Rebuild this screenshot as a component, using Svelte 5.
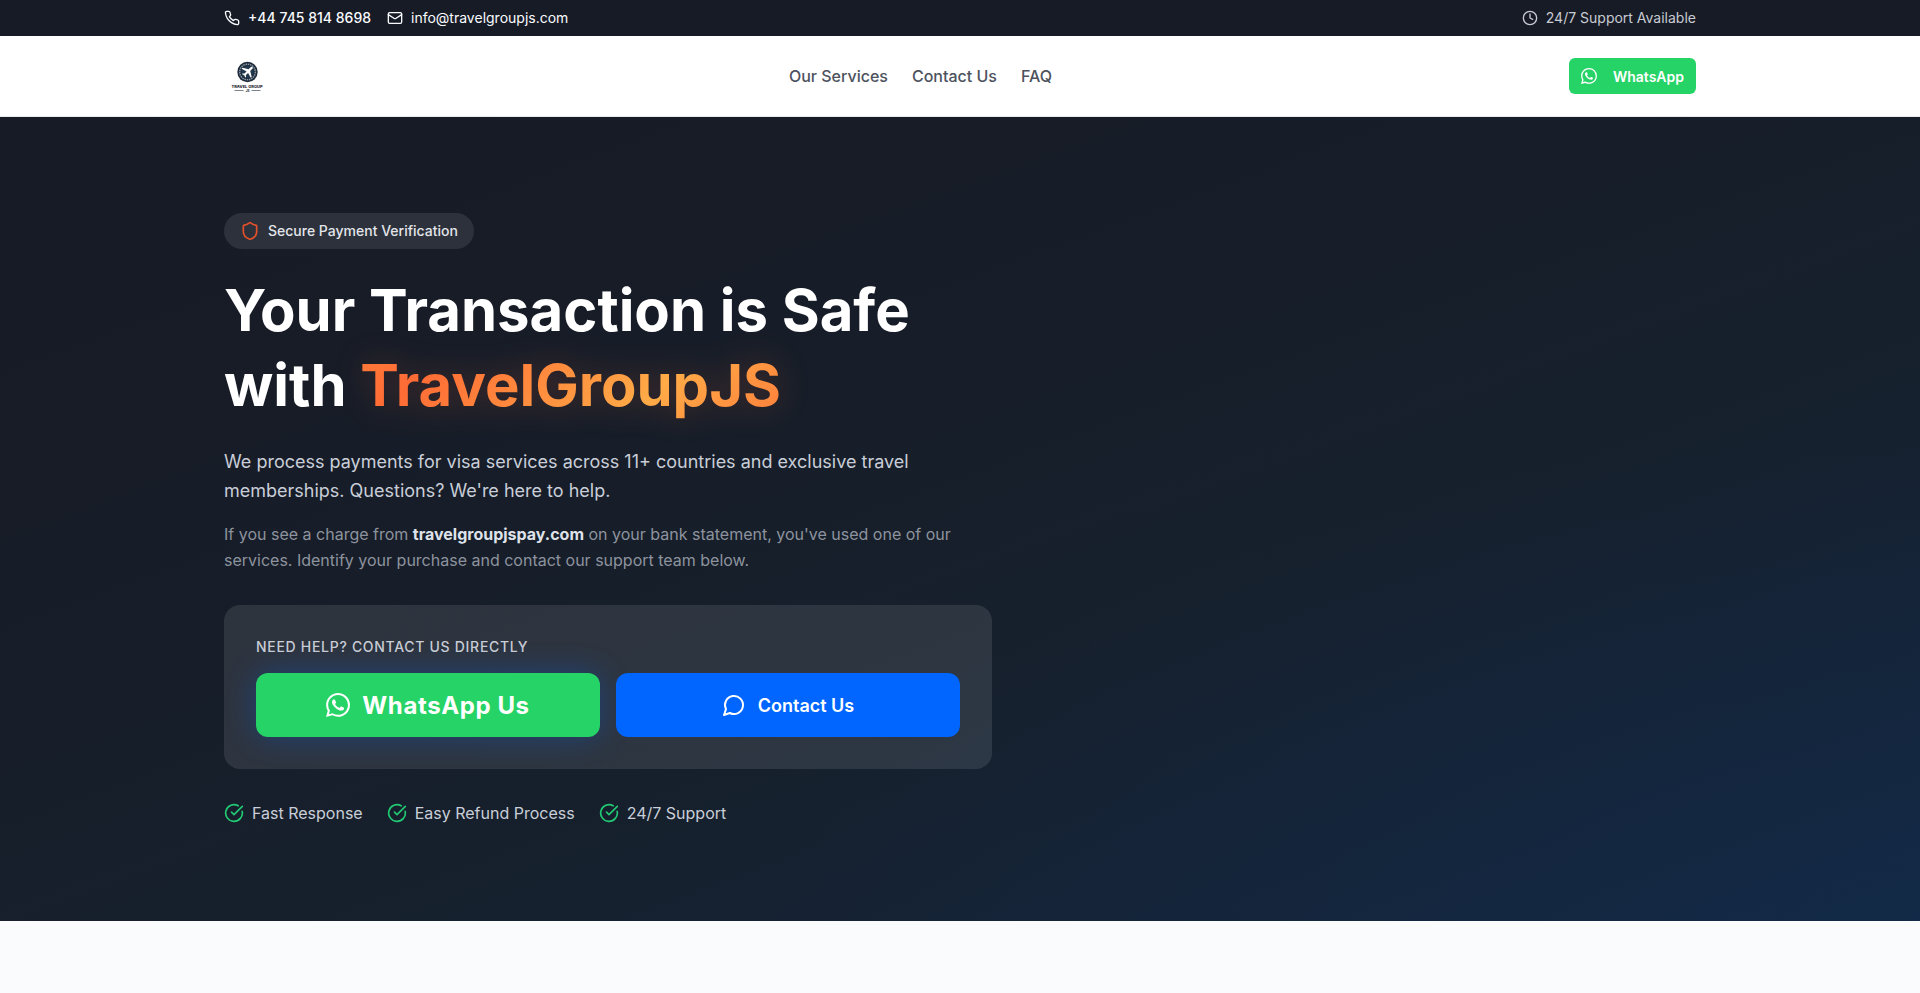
<script>
  const phone = '+44 745 814 8698';
  const email = 'info@travelgroupjs.com';
  const links = ['Our Services', 'Contact Us', 'FAQ'];
  const perks = ['Fast Response', 'Easy Refund Process', '24/7 Support'];
</script>

{#snippet whatsapp()}
  <svg class="icon" viewBox="0 0 24 24" fill="currentColor" aria-hidden="true">
    <path d="M17.472 14.382c-.297-.149-1.758-.867-2.03-.967-.273-.099-.471-.148-.67.15-.197.297-.767.966-.94 1.164-.173.199-.347.223-.644.075-.297-.15-1.255-.463-2.39-1.475-.883-.788-1.48-1.761-1.653-2.059-.173-.297-.018-.458.13-.606.134-.133.298-.347.446-.52.149-.174.198-.298.298-.497.099-.198.05-.371-.025-.52-.075-.149-.669-1.612-.916-2.207-.242-.579-.487-.5-.669-.51-.173-.008-.371-.01-.57-.01-.198 0-.52.074-.792.372-.272.297-1.04 1.016-1.04 2.479 0 1.462 1.065 2.875 1.213 3.074.149.198 2.096 3.2 5.077 4.487.709.306 1.262.489 1.694.625.712.227 1.36.195 1.871.118.571-.085 1.758-.719 2.006-1.413.248-.694.248-1.289.173-1.413-.074-.124-.272-.198-.57-.347m-5.421 7.403h-.004a9.87 9.87 0 01-5.031-1.378l-.361-.214-3.741.982.998-3.648-.235-.374a9.86 9.86 0 01-1.51-5.26c.001-5.45 4.436-9.884 9.888-9.884 2.64 0 5.122 1.03 6.988 2.898a9.825 9.825 0 012.893 6.994c-.003 5.45-4.437 9.884-9.885 9.884m8.413-18.297A11.815 11.815 0 0012.05 0C5.495 0 .16 5.335.157 11.892c0 2.096.547 4.142 1.588 5.945L.057 24l6.305-1.654a11.882 11.882 0 005.683 1.448h.005c6.554 0 11.89-5.335 11.893-11.893a11.821 11.821 0 00-3.48-8.413z" />
  </svg>
{/snippet}

<div class="topbar">
  <div class="container topbar-row">
    <div class="contacts">
      <a class="contact strong" href="tel:+447458148698">
        <svg class="icon line" viewBox="0 0 24 24" aria-hidden="true">
          <path d="M22 16.92v3a2 2 0 0 1-2.18 2 19.79 19.79 0 0 1-8.63-3.07 19.5 19.5 0 0 1-6-6 19.79 19.79 0 0 1-3.07-8.67A2 2 0 0 1 4.11 2h3a2 2 0 0 1 2 1.72 12.84 12.84 0 0 0 .7 2.81 2 2 0 0 1-.45 2.11L8.09 9.91a16 16 0 0 0 6 6l1.27-1.27a2 2 0 0 1 2.11-.45 12.84 12.84 0 0 0 2.81.7A2 2 0 0 1 22 16.92z" />
        </svg>
        {phone}
      </a>
      <a class="contact" href="mailto:{email}">
        <svg class="icon line" viewBox="0 0 24 24" aria-hidden="true">
          <rect width="20" height="16" x="2" y="4" rx="2" />
          <path d="m22 7-8.97 5.7a1.94 1.94 0 0 1-2.06 0L2 7" />
        </svg>
        {email}
      </a>
    </div>
    <div class="contact hours">
      <svg class="icon line" viewBox="0 0 24 24" aria-hidden="true">
        <circle cx="12" cy="12" r="10" />
        <path d="M12 6v6l4 2" />
      </svg>
      24/7 Support Available
    </div>
  </div>
</div>

<header>
  <div class="container header-row">
    <a class="brand" href="#top" aria-label="Travel Group JS">
      <svg viewBox="0 0 48 48" aria-hidden="true">
        <circle cx="23.500" cy="20" r="10.200" fill="#1d2b3a" />
        <circle cx="23.500" cy="20" r="7.800" fill="none" stroke="#8c99a6" stroke-width="1.400" stroke-dasharray="1.500 .8" />
        <circle cx="23.500" cy="20" r="6.200" fill="#22384c" />
        <path d="M28.600 15.200c-.6-.6-1.600-.3-2.200.3l-1.800 1.800-6-1.500-.9.900 4.900 2.700-2.100 2.200-1.900-.2-.7.7 2.300 1.200 1.200 2.300.7-.7-.2-1.900 2.200-2.100 2.700 4.900.9-.9-1.500-6 1.800-1.800c.7-.6 1.100-1.400.6-1.900z" fill="#fff" />
        <text x="23" y="35.500" text-anchor="middle" class="brand-name">TRAVEL GROUP</text>
        <text x="23.500" y="40" text-anchor="middle" class="brand-suffix">JS</text>
        <path d="M10.500 38.500h9M27.500 38.500h9" stroke="#5b6570" stroke-width=".8" />
      </svg>
    </a>
    <nav>
      {#each links as link}
        <a href="#{link.toLowerCase().replace(' ', '-')}">{link}</a>
      {/each}
    </nav>
    <button class="chat" type="button">{@render whatsapp()}WhatsApp</button>
  </div>
</header>

<main class="hero" id="top">
  <div class="container">
    <div class="content">
      <div class="badge">
        <svg class="icon line" viewBox="0 0 24 24" aria-hidden="true">
          <path d="M20 13c0 5-3.500 7.500-7.660 8.950a1 1 0 0 1-.67-.01C7.500 20.500 4 18 4 13V6a1 1 0 0 1 1-1c2 0 4.500-1.200 6.240-2.720a1.170 1.170 0 0 1 1.520 0C14.510 3.810 17 5 19 5a1 1 0 0 1 1 1z" />
        </svg>
        Secure Payment Verification
      </div>
      <h1>Your Transaction is Safe <br />with <span class="glow">TravelGroupJS</span></h1>
      <p class="lead">
        We process payments for visa services across 11+ countries and exclusive travel
        memberships. Questions? We're here to help.
      </p>
      <p class="note">
        If you see a charge from <strong>travelgroupjspay.com</strong> on your bank statement, you've
        used one of our services. Identify your purchase and contact our support team below.
      </p>
      <section class="card">
        <h2>Need help? Contact us directly</h2>
        <div class="actions">
          <button class="action primary" type="button">{@render whatsapp()}WhatsApp Us</button>
          <button class="action secondary" type="button">
            <svg class="icon line" viewBox="0 0 24 24" aria-hidden="true">
              <path d="M7.900 20A9 9 0 1 0 4 16.100L2 22Z" />
            </svg>
            Contact Us
          </button>
        </div>
      </section>
      <ul class="perks">
        {#each perks as perk}
          <li>
            <svg class="icon line" viewBox="0 0 24 24" aria-hidden="true">
              <path d="M21.801 10A10 10 0 1 1 17 3.335" />
              <path d="m9 11 3 3L22 4" />
            </svg>
            {perk}
          </li>
        {/each}
      </ul>
    </div>
  </div>
</main>

<style>
  :global(body) {
    margin: 0;
    background: #fafbfd;
    font-family: Inter, 'Liberation Sans', sans-serif;
    font-size: 16px;
    line-height: 24px;
    -webkit-font-smoothing: antialiased;
  }

  a {
    color: inherit;
    text-decoration: none;
  }

  button {
    border: 0;
    font-family: inherit;
    color: #fff;
    cursor: pointer;
  }

  .icon {
    flex: none;
    width: 16px;
    height: 16px;
  }

  .line {
    fill: none;
    stroke: currentColor;
    stroke-width: 2;
    stroke-linecap: round;
    stroke-linejoin: round;
  }

  .container {
    box-sizing: border-box;
    max-width: 1536px;
    margin: 0 auto;
    padding: 0 32px;
  }

  .topbar {
    padding: 8px 0;
    background: #171b26;
    color: #fafbfe;
    font-size: 14px;
    line-height: 20px;
  }

  .topbar-row,
  .header-row {
    display: flex;
    align-items: center;
    justify-content: space-between;
  }

  .contacts {
    display: flex;
    gap: 16px;
  }

  .contact {
    display: flex;
    align-items: center;
    gap: 8px;
  }

  .strong {
    font-weight: 500;
  }

  .hours {
    color: #c8cbd2;
  }

  header {
    background: #fff;
    border-bottom: 1px solid #e8eaee;
  }

  .header-row {
    padding-top: 16px;
    padding-bottom: 16px;
  }

  .brand {
    display: flex;
  }

  .brand svg {
    width: 48px;
    height: 48px;
  }

  .brand-name {
    font-size: 4px;
    font-weight: 800;
    fill: #1d2530;
  }

  .brand-suffix {
    font-size: 3px;
    font-weight: 800;
    fill: #1d2530;
  }

  nav {
    display: flex;
    gap: 24px;
    color: #4d525e;
    font-weight: 500;
  }

  .chat {
    display: flex;
    align-items: center;
    gap: 16px;
    height: 36px;
    padding: 0 12px;
    border-radius: 6px;
    background: #25d366;
    font-size: 14px;
    font-weight: 600;
  }

  .hero {
    padding: 96px 0;
    background:
      radial-gradient(ellipse 60% 60% at 100% 100%, rgb(14 48 90 / 25%), transparent),
      linear-gradient(160deg, #171b26 0%, #171c27 25%, #16202c 60%, #152439 85%, #142841 100%);
  }

  .content {
    max-width: 768px;
  }

  .badge {
    display: inline-flex;
    align-items: center;
    gap: 8px;
    height: 36px;
    padding: 0 16px;
    border-radius: 18px;
    background: #2c313b;
    color: #e3e5ea;
    font-size: 14px;
    font-weight: 500;
    vertical-align: top;
  }

  .badge .icon {
    width: 20px;
    height: 20px;
    color: #e2512a;
  }

  h1 {
    margin: 24px 0;
    color: #fff;
    font-size: 58px;
    line-height: 75px;
    font-weight: 700;
  }

  .glow {
    background: linear-gradient(135deg, #ff7b39 0%, #ff6b35 17%, #ffab47 69%, #ff7f3b 100%);
    background-clip: text;
    -webkit-background-clip: text;
    color: transparent;
    filter: drop-shadow(0 0 16px rgb(255 107 53 / 24%));
  }

  .lead {
    margin: 0 0 16px;
    color: #c9ced8;
    font-size: 18px;
    line-height: 29px;
  }

  .note {
    margin: 0 0 32px;
    color: #8d939e;
    line-height: 26px;
  }

  .note strong {
    color: #dfe2e9;
    font-weight: 700;
  }

  .card {
    padding: 32px;
    border-radius: 16px;
    background: rgb(255 255 255 / 10%);
  }

  h2 {
    margin: 0 0 16px;
    color: #c9cdd5;
    font-size: 14px;
    line-height: 20px;
    font-weight: 500;
    letter-spacing: 0.05em;
    text-transform: uppercase;
  }

  .actions {
    display: grid;
    grid-template-columns: 1fr 1fr;
    gap: 16px;
  }

  .action {
    display: flex;
    align-items: center;
    justify-content: center;
    gap: 12px;
    height: 64px;
    border-radius: 12px;
    font-size: 18px;
    font-weight: 600;
  }

  .action .icon {
    width: 24px;
    height: 24px;
  }

  .primary {
    background: #25d366;
    box-shadow: 0 0 30px rgb(0 102 255 / 30%);
    font-size: 24px;
    font-weight: 700;
    letter-spacing: 0.025em;
  }

  .secondary {
    background: #0066ff;
  }

  .perks {
    display: flex;
    gap: 24px;
    margin: 32px 0 0;
    padding: 0;
    list-style: none;
    color: #c9ced8;
  }

  .perks li {
    display: flex;
    align-items: center;
    gap: 8px;
  }

  .perks .icon {
    width: 20px;
    height: 20px;
    color: #22c873;
  }
</style>
